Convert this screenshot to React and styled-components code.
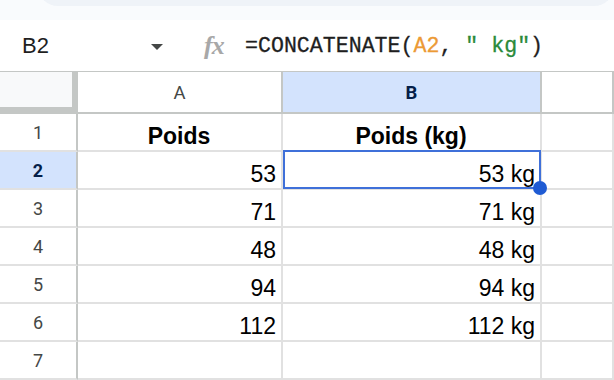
import React from 'react';
import styled, { createGlobalStyle } from 'styled-components';

const GlobalStyle = createGlobalStyle`
  html, body {
    margin: 0;
    padding: 0;
    background: #ffffff;
    overflow: hidden;
  }
  * {
    box-sizing: border-box;
  }
`;

const Page = styled.div`
  width: 614px;
  height: 380px;
  display: flex;
  flex-direction: column;
  font-family: "Liberation Sans", Arial, sans-serif;
  color: #000;
`;

const TopStrip = styled.div`
  height: 20px;
  background: #f9fbfd;
  overflow: hidden;
`;

const Toolbar = styled.div`
  height: 40px;
  margin-top: -34px;
  margin-left: 38px;
  background: #eff3f8;
  border-radius: 22px;
`;

const FormulaBar = styled.div`
  height: 52px;
  display: flex;
  align-items: center;
  background: #fff;
  border-bottom: 1px solid #c4c7c5;
`;

const NameBox = styled.div`
  width: 192px;
  display: flex;
  align-items: center;
  justify-content: space-between;
  padding: 0 29px 0 22px;
  font-size: 22px;
  color: #1f1f1f;
`;

const Caret = styled.span`
  width: 0;
  height: 0;
  border-left: 6px solid transparent;
  border-right: 6px solid transparent;
  border-top: 6px solid #444746;
  margin-top: 2px;
`;

const FxIcon = styled.span`
  width: 53px;
  padding-left: 12px;
  font-family: "Liberation Serif", serif;
  font-style: italic;
  font-weight: bold;
  font-size: 26px;
  color: #a8a8a8;
  letter-spacing: -1px;
`;

const Formula = styled.div`
  font-family: "Liberation Mono", "DejaVu Sans Mono", monospace;
  font-size: 21.6px;
  color: #1f1f1f;
  white-space: pre;
  -webkit-text-stroke: 0.3px #1f1f1f;
`;

const Token = styled.span`
  color: ${p => (p.$kind === 'ref' ? '#ec9a35' : p.$kind === 'str' ? '#2a8a3a' : 'inherit')};
  -webkit-text-stroke-color: ${p => (p.$kind === 'ref' ? '#ec9a35' : '#2a8a3a')};
`;

const Grid = styled.div`
  display: grid;
  grid-template-columns: 78px 205px 259px 1fr;
  grid-template-rows: 42px repeat(7, 38px);
`;

const Corner = styled.div`
  background: #f8f9fa;
  border-right: 6px solid #c4c7c5;
  border-bottom: 7px solid #c4c7c5;
`;

const ColHeader = styled.div`
  display: flex;
  align-items: center;
  justify-content: center;
  font-family: Roboto, "Liberation Sans", sans-serif;
  font-size: 18.5px;
  padding-top: 2px;
  color: ${p => (p.$active ? '#041e49' : '#444746')};
  font-weight: ${p => (p.$active ? 700 : 400)};
  background: ${p => (p.$active ? '#d3e3fd' : '#fff')};
  border-right: 2px solid #c4c7c5;
  border-bottom: 2px solid #c4c7c5;
`;

const RowHeader = styled.div`
  display: flex;
  align-items: center;
  justify-content: center;
  font-family: Roboto, "Liberation Sans", sans-serif;
  font-size: 18px;
  color: ${p => (p.$active ? '#041e49' : '#444746')};
  font-weight: ${p => (p.$active ? 700 : 400)};
  background: ${p => (p.$active ? '#d3e3fd' : '#fff')};
  border-right: 2px solid #c4c7c5;
  border-bottom: 2px solid #e1e1e1;
`;

const Cell = styled.div`
  position: relative;
  display: flex;
  align-items: flex-end;
  justify-content: ${p => (p.$align === 'center' ? 'center' : 'flex-end')};
  padding: 0 5px 2px 4px;
  font-size: 23px;
  line-height: 24px;
  font-weight: ${p => (p.$bold ? 700 : 400)};
  border-right: 2px solid #e1e1e1;
  border-bottom: 2px solid #e1e1e1;
  z-index: ${p => (p.$selected ? 2 : 1)};
`;

const Selection = styled.div`
  position: absolute;
  left: 0;
  top: -2px;
  right: -1px;
  bottom: -1px;
  border: 2px solid #3f70d9;
  pointer-events: none;
`;

const FillHandle = styled.div`
  position: absolute;
  right: -8px;
  bottom: -8px;
  width: 14px;
  height: 14px;
  border-radius: 50%;
  background: #1f5bd3;
`;

const rows = [
  { a: 'Poids', b: 'Poids (kg)', header: true },
  { a: '53', b: '53 kg' },
  { a: '71', b: '71 kg' },
  { a: '48', b: '48 kg' },
  { a: '94', b: '94 kg' },
  { a: '112', b: '112 kg' },
  { a: '', b: '' },
];

export default function App() {
  return (
    <Page>
      <GlobalStyle />
      <TopStrip>
        <Toolbar />
      </TopStrip>
      <FormulaBar>
        <NameBox>
          <span>B2</span>
          <Caret />
        </NameBox>
        <FxIcon>fx</FxIcon>
        <Formula>
          =CONCATENATE(<Token $kind="ref">A2</Token>, <Token $kind="str">" kg"</Token>)
        </Formula>
      </FormulaBar>
      <Grid>
        <Corner />
        <ColHeader>A</ColHeader>
        <ColHeader $active>B</ColHeader>
        <ColHeader />
        {rows.map((r, i) => {
          const n = i + 1;
          const selected = n === 2;
          return (
            <React.Fragment key={n}>
              <RowHeader $active={selected}>{n}</RowHeader>
              <Cell $bold={r.header} $align={r.header ? 'center' : 'right'}>{r.a}</Cell>
              <Cell $bold={r.header} $align={r.header ? 'center' : 'right'} $selected={selected}>
                {r.b}
                {selected && (
                  <Selection>
                    <FillHandle />
                  </Selection>
                )}
              </Cell>
              <Cell />
            </React.Fragment>
          );
        })}
      </Grid>
    </Page>
  );
}
